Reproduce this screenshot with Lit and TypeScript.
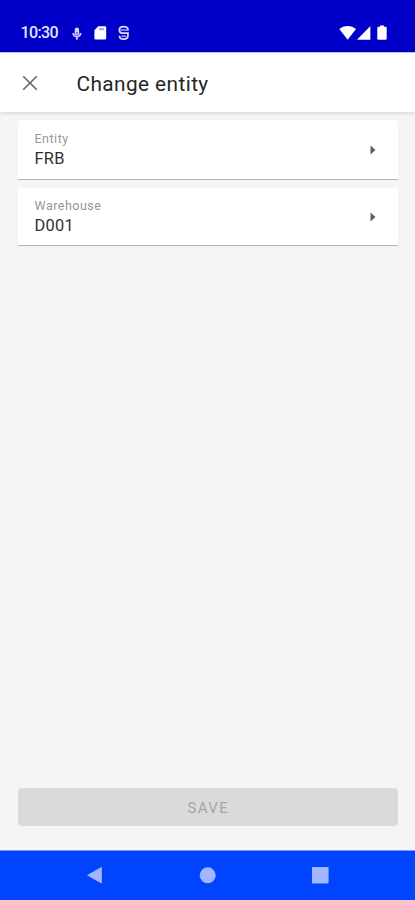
import { LitElement, html, css, svg } from "lit";
import { customElement, property } from "lit/decorators.js";

@customElement("status-bar")
class StatusBar extends LitElement {
  static styles = css`
    :host {
      display: flex;
      align-items: center;
      box-sizing: border-box;
      height: 52px;
      padding: 13px 28px 0 20.5px;
      background: #0000c8;
      color: #e4e4ff;
    }
    .time {
      width: 49px;
      padding-top: 1px;
      font-size: 16px;
      font-weight: 500;
      line-height: 20px;
      letter-spacing: -0.65px;
    }
    svg {
      display: block;
      height: 16px;
    }
    .left {
      width: 64px;
    }
    .right {
      width: 50px;
      margin-left: auto;
    }
  `;
  render() {
    return html`
      <span class="time">10:30</span>
      <svg class="left" viewBox="70 24.5 64 16">
        <rect x="74.7" y="27" width="4.4" height="8" rx="2.2" fill="#d8d8ff" />
        <path d="M73.2 32.4a3.7 3.7 0 0 0 7.4 0M76.9 36V39.2" fill="none" stroke="#c8c8ff" stroke-width="1.9" />
        <path d="M76.9 31.4v2.4" stroke="#3a3ad0" stroke-width="1.2" />
        <path d="M98.4 25.8H105a1.2 1.2 0 0 1 1.2 1.2v10.8a1.2 1.2 0 0 1-1.2 1.2h-9.4a1.2 1.2 0 0 1-1.2-1.2v-8z" fill="#fff" />
        <path d="M99 27.6h5v2.200h-5z" fill="#a8a8ee" />
        <path d="M128 30.200v-0.700c0-2.200-1.500-3.300-4.200-3.300s-4.400 1.100-4.400 3.300 1.200 3.200 3.200 3.200H128v2.300c0 2.400-1.500 3.600-4.200 3.600s-4.400-1.200-4.400-3.400" fill="none" stroke="#dcdcff" stroke-width="1.700" />
        <path d="M120.500 29.500h7.500M121.500 35.800h4.800" fill="none" stroke="#a4a4f0" stroke-width="1.400" />
      </svg>
      <svg class="right" viewBox="337 24.500 50 16" fill="#fff">
        <path d="M339.300 28.600C344 24.300 351.300 24.300 356 28.600L347.650 39.200z" />
        <path d="M370.400 25.500V39.200H357z" />
        <path d="M380 26.300V25h4v1.300h1.500a1.200 1.200 0 0 1 1.200 1.200V38a1.200 1.200 0 0 1-1.200 1.200h-7a1.200 1.200 0 0 1-1.200-1.200V27.500a1.200 1.200 0 0 1 1.200-1.200z" />
      </svg>
    `;
  }
}

@customElement("top-bar")
class TopBar extends LitElement {
  static styles = css`
    :host {
      display: flex;
      align-items: center;
      box-sizing: border-box;
      height: 59.5px;
      padding: 2px 22px 0;
      background: #fff;
      box-shadow: 0 1px 4px rgba(0, 0, 0, 0.15);
      border-top: 1px solid #bcbcf2;
      z-index: 1;
    }
    svg {
      display: block;
      width: 16px;
      height: 16px;
      margin-right: 38.5px;
    }
    .title {
      font-size: 20.8px;
      line-height: 28px;
      letter-spacing: 0.42px;
      color: #262626;
      padding-top: 1px;
    }
  `;
  render() {
    return html`
      <svg viewBox="0 0 16 16">
        <path d="M1.200 1.200L14.800 14.800M14.800 1.200L1.200 14.800" stroke="#666" stroke-width="1.600" />
      </svg>
      <span class="title">Change entity</span>
    `;
  }
}

@customElement("select-field")
class SelectField extends LitElement {
  @property() label = "";
  @property() value = "";
  static styles = css`
    :host {
      display: flex;
      align-items: center;
      justify-content: space-between;
      box-sizing: border-box;
      height: 59.5px;
      padding: 2px 22px 0 17px;
      background: #fff;
      border-bottom: 1.5px solid #b4b4b4;
      border-radius: 4px 4px 0 0;
    }
    .text {
      display: flex;
      flex-direction: column;
    }
    .label {
      font-size: 12.5px;
      line-height: 15px;
      padding-bottom: 2px;
      letter-spacing: 0.5px;
      color: #969696;
    }
    .value {
      font-size: 16.4px;
      line-height: 22px;
      letter-spacing: 0.3px;
      color: #303030;
    }
    svg {
      display: block;
      width: 6px;
      height: 10px;
    }
  `;
  render() {
    return html`
      <div class="text">
        <span class="label">${this.label}</span>
        <span class="value">${this.value}</span>
      </div>
      <svg viewBox="0 0 6 10"><path d="M0.500 0.500L5.500 5L0.500 9.500z" fill="#606060" /></svg>
    `;
  }
}

@customElement("nav-bar")
class NavBar extends LitElement {
  static styles = css`
    :host {
      display: flex;
      justify-content: center;
      align-items: center;
      gap: 95.5px;
      box-sizing: border-box;
      height: 50.5px;
      background: #0044ff;
      border-top: 1px solid #7f93f4;
    }
    svg {
      display: block;
      width: 17px;
      height: 17px;
      fill: #a0b6ff;
    }
  `;
  icon(shape: unknown) {
    return html`<svg viewBox="0 0 17 17">${shape}</svg>`;
  }
  render() {
    return html`
      ${this.icon(svg`<path d="M0 8.300L13.900 0.300Q14.900 0 14.900 1V15.600Q14.900 16.600 13.900 16.300z" />`)}
      ${this.icon(svg`<circle cx="8.700" cy="8.300" r="8" />`)}
      ${this.icon(svg`<rect x="0" y="0" width="16.600" height="16.600" rx="1" />`)}
    `;
  }
}

@customElement("app-root")
class AppRoot extends LitElement {
  static styles = css`
    :host {
      display: flex;
      flex-direction: column;
      height: 900px;
      overflow: hidden;
      background: #f5f5f5;
      font-family: Roboto, sans-serif;
    }
    .fields {
      flex: 1;
      display: flex;
      flex-direction: column;
      gap: 8px;
      padding: 8.5px 17px 0 17.5px;
    }
    .second {
      height: 58.5px;
    }
    .save {
      height: 38.5px;
      margin: 0 17px 23.5px 17.5px;
      padding: 2px 0 0 1px;
      border: 0;
      border-radius: 4px;
      background: #dadada;
      color: #a6a6a6;
      font: 400 15px / 36px Roboto, sans-serif;
      letter-spacing: 1.4px;
    }
  `;
  render() {
    return html`
      <status-bar></status-bar>
      <top-bar></top-bar>
      <div class="fields">
        <select-field label="Entity" value="FRB"></select-field>
        <select-field class="second" label="Warehouse" value="D001"></select-field>
      </div>
      <button class="save" disabled>SAVE</button>
      <nav-bar></nav-bar>
    `;
  }
}
